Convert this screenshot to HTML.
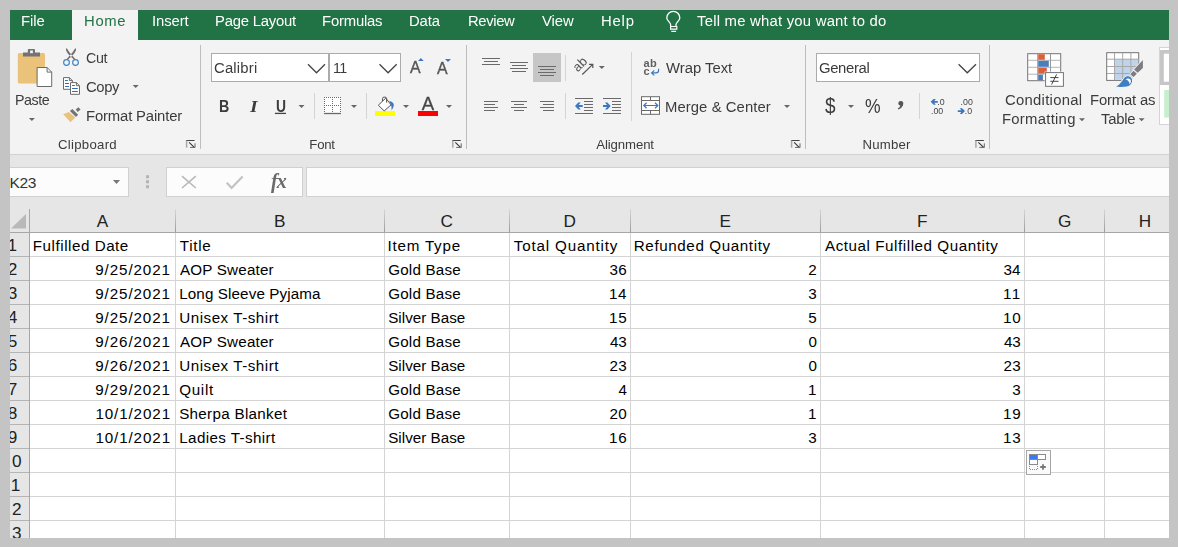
<!DOCTYPE html>
<html lang="en"><head><meta charset="utf-8"><title>Excel</title>
<style>
html,body{margin:0;padding:0}
body{width:1178px;height:547px;background:#c4c4c4;overflow:hidden;position:relative;font-family:"Liberation Sans",sans-serif}
#app{position:absolute;left:10px;top:10px;width:1159px;height:528px;overflow:hidden;background:#f3f3f3}
#in{position:absolute;left:-10px;top:-10px;width:1178px;height:547px}
#ui{position:absolute;left:0;top:0;width:1178px;height:547px;will-change:transform}
#cells{position:absolute;left:0;top:0}
.r{position:absolute}
.t{position:absolute;white-space:pre;line-height:20px}
svg{position:absolute;overflow:visible}
</style></head><body>
<div id="app"><div id="in">
<div class="r" style="left:10px;top:10px;width:1159px;height:30px;background:#217346"></div>
<div class="r" style="left:72px;top:10px;width:66px;height:30px;background:#f3f3f3"></div>
<div class="r" style="left:10px;top:154px;width:1159px;height:1px;background:#d2d2d2"></div>
<div class="r" style="left:10px;top:155px;width:1159px;height:383px;background:#e6e6e6"></div>
<div class="r" style="left:200px;top:45px;width:1px;height:104px;background:#bebebe"></div>
<div class="r" style="left:466px;top:45px;width:1px;height:104px;background:#bebebe"></div>
<div class="r" style="left:805px;top:45px;width:1px;height:104px;background:#bebebe"></div>
<div class="r" style="left:989px;top:45px;width:1px;height:104px;background:#bebebe"></div>
<div class="r" style="left:314px;top:93px;width:1px;height:26px;background:#d4d4d4"></div>
<div class="r" style="left:366px;top:93px;width:1px;height:26px;background:#d4d4d4"></div>
<div class="r" style="left:565px;top:55px;width:1px;height:26px;background:#d4d4d4"></div>
<div class="r" style="left:565px;top:93px;width:1px;height:26px;background:#d4d4d4"></div>
<div class="r" style="left:631px;top:52px;width:1px;height:69px;background:#d4d4d4"></div>
<div class="r" style="left:919px;top:93px;width:1px;height:26px;background:#d4d4d4"></div>
<div class="r" style="left:211px;top:53px;width:116px;height:27px;background:#fff;border:1px solid #ababab"></div>
<div class="r" style="left:329px;top:53px;width:70px;height:27px;background:#fff;border:1px solid #ababab"></div>
<div class="r" style="left:816px;top:53px;width:162px;height:27px;background:#fff;border:1px solid #ababab"></div>
<div class="r" style="left:533px;top:53px;width:28px;height:29px;background:#c6c6c6"></div>
<div class="r" style="left:375px;top:111px;width:20px;height:5px;background:#ffff00"></div>
<div class="r" style="left:418px;top:111px;width:20px;height:5px;background:#ff0000"></div>
<div class="r" style="left:-5px;top:167px;width:132px;height:28px;background:#fcfcfc;border:1px solid #d0d0d0"></div>
<div class="r" style="left:166px;top:167px;width:135px;height:28px;background:#fcfcfc;border:1px solid #d0d0d0"></div>
<div class="r" style="left:306px;top:167px;width:872px;height:28px;background:#fcfcfc;border:1px solid #d0d0d0"></div>
<div class="r" style="left:30px;top:233px;width:1139px;height:305px;background:#fff"></div>
<div class="r" style="left:30px;top:256px;width:1139px;height:1px;background:#d4d4d4"></div>
<div class="r" style="left:10px;top:256px;width:19px;height:1px;background:#b4b4b4"></div>
<div class="r" style="left:30px;top:280px;width:1139px;height:1px;background:#d4d4d4"></div>
<div class="r" style="left:10px;top:280px;width:19px;height:1px;background:#b4b4b4"></div>
<div class="r" style="left:30px;top:304px;width:1139px;height:1px;background:#d4d4d4"></div>
<div class="r" style="left:10px;top:304px;width:19px;height:1px;background:#b4b4b4"></div>
<div class="r" style="left:30px;top:328px;width:1139px;height:1px;background:#d4d4d4"></div>
<div class="r" style="left:10px;top:328px;width:19px;height:1px;background:#b4b4b4"></div>
<div class="r" style="left:30px;top:352px;width:1139px;height:1px;background:#d4d4d4"></div>
<div class="r" style="left:10px;top:352px;width:19px;height:1px;background:#b4b4b4"></div>
<div class="r" style="left:30px;top:376px;width:1139px;height:1px;background:#d4d4d4"></div>
<div class="r" style="left:10px;top:376px;width:19px;height:1px;background:#b4b4b4"></div>
<div class="r" style="left:30px;top:400px;width:1139px;height:1px;background:#d4d4d4"></div>
<div class="r" style="left:10px;top:400px;width:19px;height:1px;background:#b4b4b4"></div>
<div class="r" style="left:30px;top:424px;width:1139px;height:1px;background:#d4d4d4"></div>
<div class="r" style="left:10px;top:424px;width:19px;height:1px;background:#b4b4b4"></div>
<div class="r" style="left:30px;top:448px;width:1139px;height:1px;background:#d4d4d4"></div>
<div class="r" style="left:10px;top:448px;width:19px;height:1px;background:#b4b4b4"></div>
<div class="r" style="left:30px;top:472px;width:1139px;height:1px;background:#d4d4d4"></div>
<div class="r" style="left:10px;top:472px;width:19px;height:1px;background:#b4b4b4"></div>
<div class="r" style="left:30px;top:496px;width:1139px;height:1px;background:#d4d4d4"></div>
<div class="r" style="left:10px;top:496px;width:19px;height:1px;background:#b4b4b4"></div>
<div class="r" style="left:30px;top:520px;width:1139px;height:1px;background:#d4d4d4"></div>
<div class="r" style="left:10px;top:520px;width:19px;height:1px;background:#b4b4b4"></div>
<div class="r" style="left:175px;top:233px;width:1px;height:305px;background:#d4d4d4"></div>
<div class="r" style="left:175px;top:209px;width:1px;height:23px;background:linear-gradient(#d6d6d6,#9c9c9c)"></div>
<div class="r" style="left:384px;top:233px;width:1px;height:305px;background:#d4d4d4"></div>
<div class="r" style="left:384px;top:209px;width:1px;height:23px;background:linear-gradient(#d6d6d6,#9c9c9c)"></div>
<div class="r" style="left:509px;top:233px;width:1px;height:305px;background:#d4d4d4"></div>
<div class="r" style="left:509px;top:209px;width:1px;height:23px;background:linear-gradient(#d6d6d6,#9c9c9c)"></div>
<div class="r" style="left:630px;top:233px;width:1px;height:305px;background:#d4d4d4"></div>
<div class="r" style="left:630px;top:209px;width:1px;height:23px;background:linear-gradient(#d6d6d6,#9c9c9c)"></div>
<div class="r" style="left:820px;top:233px;width:1px;height:305px;background:#d4d4d4"></div>
<div class="r" style="left:820px;top:209px;width:1px;height:23px;background:linear-gradient(#d6d6d6,#9c9c9c)"></div>
<div class="r" style="left:1024px;top:233px;width:1px;height:305px;background:#d4d4d4"></div>
<div class="r" style="left:1024px;top:209px;width:1px;height:23px;background:linear-gradient(#d6d6d6,#9c9c9c)"></div>
<div class="r" style="left:1104px;top:233px;width:1px;height:305px;background:#d4d4d4"></div>
<div class="r" style="left:1104px;top:209px;width:1px;height:23px;background:linear-gradient(#d6d6d6,#9c9c9c)"></div>
<div class="r" style="left:29px;top:209px;width:1px;height:329px;background:#a6a6a6"></div>
<div class="r" style="left:10px;top:232px;width:1159px;height:1px;background:#a6a6a6"></div>
<div id="cells">
<span class="t" style="left:9.6px;top:173px;font-size:15.5px;color:#333;letter-spacing:-0.40px">K23</span>
<span class="t" style="left:32.8px;top:236px;font-size:15.2px;color:#000;letter-spacing:0.53px">Fulfilled Date</span>
<span class="t" style="left:179.8px;top:236px;font-size:15.2px;color:#000;letter-spacing:0.69px">Title</span>
<span class="t" style="left:387.5px;top:236px;font-size:15.2px;color:#000;letter-spacing:0.78px">Item Type</span>
<span class="t" style="left:513.8px;top:236px;font-size:15.2px;color:#000;letter-spacing:0.82px">Total Quantity</span>
<span class="t" style="left:633.8px;top:236px;font-size:15.2px;color:#000;letter-spacing:0.60px">Refunded Quantity</span>
<span class="t" style="left:825.0px;top:236px;font-size:15.2px;color:#000;letter-spacing:0.55px">Actual Fulfilled Quantity</span>
<span class="t" style="left:95.2px;top:260px;font-size:15.2px;color:#000;letter-spacing:0.91px">9/25/2021</span>
<span class="t" style="left:180.0px;top:260px;font-size:15.2px;color:#000;letter-spacing:0.19px">AOP Sweater</span>
<span class="t" style="left:388.2px;top:260px;font-size:15.2px;color:#000;letter-spacing:0.19px">Gold Base</span>
<span class="t" style="left:609.4px;top:260px;font-size:15.2px;color:#000;letter-spacing:0.34px">36</span>
<span class="t" style="left:808.3px;top:260px;font-size:15.2px;color:#000">2</span>
<span class="t" style="left:1003.4px;top:260px;font-size:15.2px;color:#000;letter-spacing:0.09px">34</span>
<span class="t" style="left:95.2px;top:284px;font-size:15.2px;color:#000;letter-spacing:0.91px">9/25/2021</span>
<span class="t" style="left:179.2px;top:284px;font-size:15.2px;color:#000;letter-spacing:0.12px">Long Sleeve Pyjama</span>
<span class="t" style="left:388.2px;top:284px;font-size:15.2px;color:#000;letter-spacing:0.19px">Gold Base</span>
<span class="t" style="left:608.9px;top:284px;font-size:15.2px;color:#000;letter-spacing:0.59px">14</span>
<span class="t" style="left:808.3px;top:284px;font-size:15.2px;color:#000">3</span>
<span class="t" style="left:1002.9px;top:284px;font-size:15.2px;color:#000;letter-spacing:1.60px">11</span>
<span class="t" style="left:95.2px;top:308px;font-size:15.2px;color:#000;letter-spacing:0.91px">9/25/2021</span>
<span class="t" style="left:179.2px;top:308px;font-size:15.2px;color:#000;letter-spacing:0.52px">Unisex T-shirt</span>
<span class="t" style="left:388.2px;top:308px;font-size:15.2px;color:#000;letter-spacing:0.03px">Silver Base</span>
<span class="t" style="left:608.9px;top:308px;font-size:15.2px;color:#000;letter-spacing:0.84px">15</span>
<span class="t" style="left:808.3px;top:308px;font-size:15.2px;color:#000">5</span>
<span class="t" style="left:1002.9px;top:308px;font-size:15.2px;color:#000;letter-spacing:0.84px">10</span>
<span class="t" style="left:95.2px;top:332px;font-size:15.2px;color:#000;letter-spacing:0.91px">9/26/2021</span>
<span class="t" style="left:180.0px;top:332px;font-size:15.2px;color:#000;letter-spacing:0.19px">AOP Sweater</span>
<span class="t" style="left:388.2px;top:332px;font-size:15.2px;color:#000;letter-spacing:0.19px">Gold Base</span>
<span class="t" style="left:609.9px;top:332px;font-size:15.2px;color:#000;letter-spacing:-0.16px">43</span>
<span class="t" style="left:808.4px;top:332px;font-size:15.2px;color:#000">0</span>
<span class="t" style="left:1003.9px;top:332px;font-size:15.2px;color:#000;letter-spacing:-0.16px">43</span>
<span class="t" style="left:95.2px;top:356px;font-size:15.2px;color:#000;letter-spacing:0.91px">9/26/2021</span>
<span class="t" style="left:179.2px;top:356px;font-size:15.2px;color:#000;letter-spacing:0.52px">Unisex T-shirt</span>
<span class="t" style="left:388.2px;top:356px;font-size:15.2px;color:#000;letter-spacing:0.03px">Silver Base</span>
<span class="t" style="left:609.4px;top:356px;font-size:15.2px;color:#000;letter-spacing:0.34px">23</span>
<span class="t" style="left:808.4px;top:356px;font-size:15.2px;color:#000">0</span>
<span class="t" style="left:1003.4px;top:356px;font-size:15.2px;color:#000;letter-spacing:0.34px">23</span>
<span class="t" style="left:95.2px;top:380px;font-size:15.2px;color:#000;letter-spacing:0.91px">9/29/2021</span>
<span class="t" style="left:179.2px;top:380px;font-size:15.2px;color:#000;letter-spacing:0.71px">Quilt</span>
<span class="t" style="left:388.2px;top:380px;font-size:15.2px;color:#000;letter-spacing:0.19px">Gold Base</span>
<span class="t" style="left:618.4px;top:380px;font-size:15.2px;color:#000">4</span>
<span class="t" style="left:808.0px;top:380px;font-size:15.2px;color:#000">1</span>
<span class="t" style="left:1012.3px;top:380px;font-size:15.2px;color:#000">3</span>
<span class="t" style="left:95.4px;top:404px;font-size:15.2px;color:#000;letter-spacing:0.89px">10/1/2021</span>
<span class="t" style="left:179.2px;top:404px;font-size:15.2px;color:#000;letter-spacing:0.30px">Sherpa Blanket</span>
<span class="t" style="left:388.2px;top:404px;font-size:15.2px;color:#000;letter-spacing:0.19px">Gold Base</span>
<span class="t" style="left:609.4px;top:404px;font-size:15.2px;color:#000;letter-spacing:0.34px">20</span>
<span class="t" style="left:808.0px;top:404px;font-size:15.2px;color:#000">1</span>
<span class="t" style="left:1002.9px;top:404px;font-size:15.2px;color:#000;letter-spacing:0.84px">19</span>
<span class="t" style="left:95.4px;top:428px;font-size:15.2px;color:#000;letter-spacing:0.89px">10/1/2021</span>
<span class="t" style="left:179.2px;top:428px;font-size:15.2px;color:#000;letter-spacing:0.40px">Ladies T-shirt</span>
<span class="t" style="left:388.2px;top:428px;font-size:15.2px;color:#000;letter-spacing:0.03px">Silver Base</span>
<span class="t" style="left:608.9px;top:428px;font-size:15.2px;color:#000;letter-spacing:0.84px">16</span>
<span class="t" style="left:808.3px;top:428px;font-size:15.2px;color:#000">3</span>
<span class="t" style="left:1002.9px;top:428px;font-size:15.2px;color:#000;letter-spacing:0.84px">13</span>
<span class="t" style="left:96.8px;top:211px;font-size:17.2px;color:#222">A</span>
<span class="t" style="left:274.0px;top:211px;font-size:17.2px;color:#222">B</span>
<span class="t" style="left:440.6px;top:211px;font-size:17.2px;color:#222">C</span>
<span class="t" style="left:563.5px;top:211px;font-size:17.2px;color:#222">D</span>
<span class="t" style="left:719.4px;top:211px;font-size:17.2px;color:#222">E</span>
<span class="t" style="left:916.9px;top:211px;font-size:17.2px;color:#222">F</span>
<span class="t" style="left:1058.1px;top:211px;font-size:17.2px;color:#222">G</span>
<span class="t" style="left:1138.8px;top:211px;font-size:17.2px;color:#222">H</span>
<span class="t" style="left:7.6px;top:235px;font-size:17.2px;color:#222">1</span>
<span class="t" style="left:7.8px;top:259px;font-size:17.2px;color:#222">2</span>
<span class="t" style="left:7.8px;top:283px;font-size:17.2px;color:#222">3</span>
<span class="t" style="left:7.8px;top:307px;font-size:17.2px;color:#222">4</span>
<span class="t" style="left:7.8px;top:331px;font-size:17.2px;color:#222">5</span>
<span class="t" style="left:7.7px;top:355px;font-size:17.2px;color:#222">6</span>
<span class="t" style="left:7.7px;top:379px;font-size:17.2px;color:#222">7</span>
<span class="t" style="left:7.8px;top:403px;font-size:17.2px;color:#222">8</span>
<span class="t" style="left:7.8px;top:427px;font-size:17.2px;color:#222">9</span>
<span class="t" style="left:0.9px;top:451px;font-size:17.2px;color:#222;letter-spacing:1.60px">10</span>
<span class="t" style="left:0.9px;top:475px;font-size:17.2px;color:#222;letter-spacing:1.60px">11</span>
<span class="t" style="left:0.9px;top:499px;font-size:17.2px;color:#222;letter-spacing:1.60px">12</span>
<span class="t" style="left:0.9px;top:523px;font-size:17.2px;color:#222;letter-spacing:1.60px">13</span>
</div>
<div id="ui">
<svg style="left:0;top:0" width="1178" height="547" viewBox="0 0 1178 547">
<path d="M28.9 118h6l-3 3z" fill="#666"/>
<path d="M132.7 85h6l-3 3z" fill="#666"/>
<path d="M298.5 105h6l-3 3z" fill="#666"/>
<path d="M351 105h6l-3 3z" fill="#666"/>
<path d="M403 105h6l-3 3z" fill="#666"/>
<path d="M446 105h6l-3 3z" fill="#666"/>
<path d="M598.8 66h6l-3 3z" fill="#666"/>
<path d="M784 105h6l-3 3z" fill="#666"/>
<path d="M848 105h6l-3 3z" fill="#666"/>
<path d="M1079 118.2h6l-3 3z" fill="#666"/>
<path d="M1138.6 118.2h6l-3 3z" fill="#666"/>
<path d="M112.9 180h7.2l-3.6 4z" fill="#777"/>
<g fill="none" stroke="#fff" stroke-width="1.3" transform="translate(0 .9)"><path d="M670.6 25.3v-1.6c0-2.2-3.8-4-3.8-6.7a6.5 6.5 0 0 1 13 0c0 2.7-3.8 4.5-3.8 6.7v1.6"/><path d="M670.6 25.6h6.2v2.6h-6.2zM671.3 30.4h4.8" stroke-width="1.2"/></g>
<rect x="17.8" y="53" width="27.2" height="30.6" rx="1.5" fill="#eac27a"/>
<path d="M23 52.4h4.8v-2.4a1 1 0 0 1 1-1h5.2a1 1 0 0 1 1 1v2.4h5v4.2h-17z" fill="#737373"/>
<rect x="30.1" y="50.5" width="2.8" height="2.7" fill="#f3f3f3"/>
<path d="M37.1 67.5h10l4.6 4.6v14.4h-14.6z" fill="#fff" stroke="#6a6a6a" stroke-width="1"/><path d="M47.1 67.5v4.6h4.6" fill="none" stroke="#6a6a6a"/>
<path d="M66.18 47.98 67.49 49.17 69.16 52.02 72.01 55.31 75.52 59.25 74.42 59.69 70.47 56.62 67.62 53.33 66 50.26zM75.82 47.98 74.51 49.17 72.84 52.02 69.99 55.31 66.48 59.25 67.58 59.69 71.53 56.62 74.38 53.33 76 50.26z" fill="#6e6e6e"/>
<circle cx="66.5" cy="62.5" r="2.85" fill="none" stroke="#4080c4" stroke-width="1.15"/><circle cx="75.5" cy="62.5" r="2.85" fill="none" stroke="#4080c4" stroke-width="1.15"/>
<path d="M63.5 77.6h5.9l3 3v8.7h-8.9z" fill="#fff" stroke="#6a6a6a"/><path d="M69.4 77.6v3h3" fill="none" stroke="#6a6a6a"/>
<path d="M65 80.5h2.8M65 83.5h4M65 86.5h4" stroke="#2e6db4" stroke-width="1.1"/>
<path d="M70.5 82.6h5.9l3.1 3.1v8.6h-9z" fill="#fff" stroke="#6a6a6a"/><path d="M76.4 82.6v3.1h3.1" fill="none" stroke="#6a6a6a"/>
<path d="M72.1 85.5h2.8M72.1 88.5h5.7M72.1 91.5h5.7" stroke="#2e6db4" stroke-width="1.1"/>
<path d="M63.2 114.3L68.9 112 75.3 117.5 70.5 122.3z" fill="#eac27a"/>
<path d="M69.9 111L72.3 109.1 78.1 114.8 76 116.9z" fill="#737373"/><path d="M75.7 109.6L78.4 107.2 80.6 109.4 77.7 112z" fill="#737373"/>
<path d="M274.9 113.4h11.1" stroke="#444" stroke-width="1.3"/>
<path d="M308 64.3L316.5 72.8L325 64.3" fill="none" stroke="#444" stroke-width="1.3"/>
<path d="M379.5 64.3L388.1 72.8L396.7 64.3" fill="none" stroke="#444" stroke-width="1.3"/>
<path d="M958.6 64.3L967.3 72.8L976 64.3" fill="none" stroke="#444" stroke-width="1.3"/>
<rect x="324" y="97" width="17" height="17" fill="#fff"/>
<g stroke="#6a6a6a" stroke-width="1" stroke-dasharray="1 1"><path d="M324 97.5h17M324 105.5h17M324.5 97v16M332.5 97v16M340.5 97v16"/></g>
<path d="M324 113.5h17" stroke="#6a6a6a" stroke-width="1.3"/>
<path d="M378.3 105.2L385.8 98.1 391 104.9 384.2 110.9z" fill="#fff" stroke="#555" stroke-width="1"/>
<path d="M382.5 101v-2.3a1.6 1.6 0 0 1 1.6-1.6h0.9a1.6 1.6 0 0 1 1.6 1.6v4" fill="none" stroke="#555" stroke-width="1"/>
<path d="M389.1 101c3 .5 4.7 2 4.7 4 0 1.5-1 3.5-2.2 5.4 .3-3.5-.5-6.5-2.5-9.4z" fill="#3a78c0"/>
<path d="M418.1 60.9l2.8-2.9 2.8 2.9z" fill="#3a78c0"/><path d="M445 59.1h6l-3 2.9z" fill="#3a78c0"/>
<path d="M482 58.5H500M484 61.5H498M482 64.5H500" stroke="#6a6a6a" stroke-width="1"/>
<path d="M510 62.5H528M512 65.5H526M510 68.5H528M512 71.5H526" stroke="#6a6a6a" stroke-width="1"/>
<path d="M538 66.5H556M540 69.5H554M538 72.5H556M540 75.5H554" stroke="#6a6a6a" stroke-width="1"/>
<path d="M484 101.5H498M484 104.5H495M484 107.5H498M484 110.5H495" stroke="#6a6a6a" stroke-width="1"/>
<path d="M511 101.5H527M514 104.5H524M511 107.5H527M514 110.5H524" stroke="#6a6a6a" stroke-width="1"/>
<path d="M540 101.5H554M543 104.5H554M540 107.5H554M543 110.5H554" stroke="#6a6a6a" stroke-width="1"/>
<text x="0" y="0" transform="translate(577.8 72.4) rotate(-45)" font-family="Liberation Sans, sans-serif" font-size="13" fill="#555">ab</text>
<path d="M582.3 74.5L592.5 64.6M589 64.4h3.8v3.6" fill="none" stroke="#555" stroke-width="1.2"/>
<path d="M575 98.5H593M584 101.5H593M584 104.5H593M584 107.5H593M584 110.5H593M575 113.5H593" stroke="#6a6a6a" stroke-width="1"/>
<path d="M603 98.5H621M612 101.5H621M612 104.5H621M612 107.5H621M612 110.5H621M603 113.5H621" stroke="#6a6a6a" stroke-width="1"/>
<path d="M582.7 105.1v1.8h-4l2 2.6h-2.4l-3.3-3.5 3.3-3.5h2.4l-2 2.6z" fill="#3a78c0"/>
<path d="M603 105.1v1.8h4l-2 2.6h2.4l3.3-3.5-3.3-3.5h-2.4l2 2.6z" fill="#3a78c0"/>
<text x="643.4" y="66.7" font-family="Liberation Sans, sans-serif" font-size="11" font-weight="bold" fill="#606060" letter-spacing="0.6">ab</text><text x="643.4" y="74.8" font-family="Liberation Sans, sans-serif" font-size="11" font-weight="bold" fill="#606060">c</text>
<path d="M658.6 68.8v1.5a2.6 2.6 0 0 1-2.6 2.6h-4.2M654.3 70.4l-2.7 2.5 2.7 2.5" fill="none" stroke="#3a78c0" stroke-width="1.2"/>
<rect x="641.5" y="96.7" width="18" height="17.6" fill="#fff" stroke="#6a6a6a"/><path d="M641.5 100.5h18M641.5 110.5h18M650.5 96.7v3.8M650.5 110.5v3.8" stroke="#6a6a6a" fill="none"/>
<path d="M644 105.5h13.5M646.6 102.8l-2.8 2.7 2.8 2.7M655 102.8l2.8 2.7-2.8 2.7" stroke="#3a78c0" stroke-width="1.2" fill="none"/>
<path d="M898.3 103.3a2.5 2.5 0 1 1 5 .2c0 2.5-1.8 4.8-5 6.1l-.5-1c1.5-.8 2.4-1.8 2.5-3-1.2-.1-2-1-2-2.3z" fill="#555"/>
<text x="937.2" y="104.8" font-family="Liberation Sans, sans-serif" font-size="8.8" fill="#444">.0</text>
<text x="931" y="113.6" font-family="Liberation Sans, sans-serif" font-size="8.8" fill="#444">.00</text>
<text x="960.6" y="104.8" font-family="Liberation Sans, sans-serif" font-size="8.8" fill="#444">.00</text>
<text x="964.8" y="113.6" font-family="Liberation Sans, sans-serif" font-size="8.8" fill="#444">.0</text>
<path d="M937.8 101v1.7h-3.5l1.5 2h-2.2l-3-2.85 3-2.85h2.2l-1.5 2z" fill="#3a78c0"/>
<path d="M957.8 110.2v1.7h3.5l-1.5 2h2.2l3-2.85-3-2.85h-2.2l1.5 2z" fill="#3a78c0"/>
<g transform="translate(186 140)" fill="none"><path d="M0 .5h8.6" stroke="#444"/><path d="M.6 .5v7.2" stroke="#a8a8a8" stroke-width="1.5"/><path d="M3.1 2.4L8.3 7.4" stroke="#333" stroke-width="1.1"/><path d="M4 7.4h5M9 3.3v4.4" stroke="#666"/></g>
<g transform="translate(452.2 140)" fill="none"><path d="M0 .5h8.6" stroke="#444"/><path d="M.6 .5v7.2" stroke="#a8a8a8" stroke-width="1.5"/><path d="M3.1 2.4L8.3 7.4" stroke="#333" stroke-width="1.1"/><path d="M4 7.4h5M9 3.3v4.4" stroke="#666"/></g>
<g transform="translate(791 140)" fill="none"><path d="M0 .5h8.6" stroke="#444"/><path d="M.6 .5v7.2" stroke="#a8a8a8" stroke-width="1.5"/><path d="M3.1 2.4L8.3 7.4" stroke="#333" stroke-width="1.1"/><path d="M4 7.4h5M9 3.3v4.4" stroke="#666"/></g>
<g transform="translate(975.3 140)" fill="none"><path d="M0 .5h8.6" stroke="#444"/><path d="M.6 .5v7.2" stroke="#a8a8a8" stroke-width="1.5"/><path d="M3.1 2.4L8.3 7.4" stroke="#333" stroke-width="1.1"/><path d="M4 7.4h5M9 3.3v4.4" stroke="#666"/></g>
<rect x="1027.7" y="53.7" width="33" height="27" fill="#fff" stroke="#737373"/>
<path d="M1028 60.3h32.5M1028 67.3h32.5M1028 74.2h32.5" stroke="#b4b4b4"/><path d="M1037.7 54v26.5M1050.5 54v26.5" stroke="#999"/>
<rect x="1038.2" y="54.2" width="6.6" height="5.6" fill="#d9603b"/><rect x="1038.2" y="60.8" width="10.6" height="6" fill="#4a7ebb"/><rect x="1038.2" y="67.8" width="8.6" height="5.9" fill="#d9603b"/><rect x="1038.2" y="74.7" width="4.7" height="5.5" fill="#4a7ebb"/>
<rect x="1044.6" y="71.6" width="19.8" height="15.7" fill="#f3f3f3"/><rect x="1045.6" y="72.6" width="17.8" height="13.7" fill="#fff" stroke="#737373"/>
<path d="M1050.3 77.6h8.2M1050.3 81.3h8.2M1051.6 84.5L1056.6 74.4" stroke="#444" stroke-width="1" fill="none"/>
<rect x="1106.7" y="52.7" width="32" height="27.7" fill="#fff" stroke="#737373"/><rect x="1114.5" y="59.2" width="23.7" height="20.7" fill="#bfd4ea"/>
<path d="M1107 59.2h31.5M1107 66.5h31.5M1107 73.5h31.5M1114.5 53v27M1122.7 53v27M1130.9 53v27" stroke="#a8a8a8" fill="none"/>
<path d="M1137.6 72.7L1136.8 73.8 1133.6 77.1 1132 80.5 1130.5 81.4H1140.6V70.8z" fill="#f3f3f3"/>
<g stroke="#f3f3f3" stroke-width="1.6" stroke-linejoin="round"><path d="M1142.9 60.1V68L1137.6 72.7 1134.1 69.6z" fill="#7d7d7d"/><path d="M1133.5 70.8L1136.8 73.8 1133.6 77.1 1130.3 74.2z" fill="#7d7d7d"/><path d="M1116 86.8c4.5-2.5 6.5-6.5 8.2-8.8 2-2.4 5.3-2.2 6.9-.2 1.7 2.2 1.2 5.3-1 7.1-2.2 1.7-6 2.2-14.1 1.9z" fill="#3f7ec2"/></g>
<path d="M1142.9 60.1V68L1137.6 72.7 1134.1 69.6z" fill="#7d7d7d"/><path d="M1133.5 70.8L1136.8 73.8 1133.6 77.1 1130.3 74.2z" fill="#7d7d7d"/><path d="M1116 86.8c4.5-2.5 6.5-6.5 8.2-8.8 2-2.4 5.3-2.2 6.9-.2 1.7 2.2 1.2 5.3-1 7.1-2.2 1.7-6 2.2-14.1 1.9z" fill="#3f7ec2"/>
<path d="M1125.4 79.2c1.6-1.2 4-1.1 5 .4 1 1.5.5 3.6-.9 4.6.1-2.3-1.4-4.3-4.1-5z" fill="#fff"/>
<rect x="1159.5" y="47.5" width="12" height="77" fill="#fff" stroke="#d4d4d4"/><rect x="1160" y="50" width="11" height="35" fill="#c6c6c6"/><rect x="1163.8" y="53.7" width="8" height="28" fill="#fff"/><rect x="1164.2" y="90" width="8" height="27.6" fill="#c6efce"/>
<path d="M146 175.2h3v3h-3zM146 180.2h3v3h-3zM146 185.2h3v3h-3z" fill="#b4b4b4"/>
<path d="M182 176.2L195.8 188M195.8 176.2L182 188" stroke="#b8b8b8" stroke-width="1.6" fill="none"/>
<path d="M226.8 182.7L231.6 188 242.6 176.6" stroke="#c2c2c2" stroke-width="2.2" fill="none"/>
<path d="M26 214v14.5h-15z" fill="#b9b9b9"/>
<rect x="1026.5" y="450.5" width="24" height="24" fill="#fafafa" stroke="#a6a6a6"/>
<rect x="1029.5" y="454.5" width="8" height="5" fill="#3b78f0" stroke="#8a8a8a"/><rect x="1037.5" y="454.5" width="8" height="5" fill="#fff" stroke="#8a8a8a"/><rect x="1029.5" y="459.5" width="8" height="5" fill="#fff" stroke="#8a8a8a"/>
<path d="M1029.5 466v3.5h8V466" fill="none" stroke="#8a8a8a" stroke-dasharray="1 1"/><path d="M1043 464.2v5.6M1040.2 467h5.6" stroke="#777" stroke-width="1.8"/>
</svg>
<span class="t" style="left:20.9px;top:11px;font-size:15.4px;color:#fff;letter-spacing:-0.09px;transform:scaleX(0.965);transform-origin:0 0">File</span>
<span class="t" style="left:84.0px;top:11px;font-size:15.4px;color:#217346;letter-spacing:0.68px;transform:scaleX(0.965);transform-origin:0 0">Home</span>
<span class="t" style="left:151.6px;top:11px;font-size:15.4px;color:#fff;letter-spacing:-0.10px;transform:scaleX(0.965);transform-origin:0 0">Insert</span>
<span class="t" style="left:214.5px;top:11px;font-size:15.4px;color:#fff;letter-spacing:-0.24px;transform:scaleX(0.965);transform-origin:0 0">Page Layout</span>
<span class="t" style="left:321.8px;top:11px;font-size:15.4px;color:#fff;letter-spacing:-0.20px;transform:scaleX(0.965);transform-origin:0 0">Formulas</span>
<span class="t" style="left:409.2px;top:11px;font-size:15.4px;color:#fff;letter-spacing:-0.12px;transform:scaleX(0.965);transform-origin:0 0">Data</span>
<span class="t" style="left:467.8px;top:11px;font-size:15.4px;color:#fff;letter-spacing:-0.40px;transform:scaleX(0.965);transform-origin:0 0">Review</span>
<span class="t" style="left:541.9px;top:11px;font-size:15.4px;color:#fff;letter-spacing:-0.10px;transform:scaleX(0.965);transform-origin:0 0">View</span>
<span class="t" style="left:600.7px;top:11px;font-size:15.4px;color:#fff;letter-spacing:0.83px;transform:scaleX(0.965);transform-origin:0 0">Help</span>
<span class="t" style="left:696.9px;top:11px;font-size:15.4px;color:#fff;letter-spacing:0.24px;transform:scaleX(0.965);transform-origin:0 0">Tell me what you want to do</span>
<span class="t" style="left:15.0px;top:90px;font-size:14.8px;color:#3c3c3c;letter-spacing:-0.50px;transform:scaleX(0.965);transform-origin:0 0">Paste</span>
<span class="t" style="left:86.3px;top:48px;font-size:14.8px;color:#3c3c3c;letter-spacing:-0.45px;transform:scaleX(0.965);transform-origin:0 0">Cut</span>
<span class="t" style="left:86.3px;top:77px;font-size:15.4px;color:#3c3c3c;letter-spacing:-0.41px;transform:scaleX(0.965);transform-origin:0 0">Copy</span>
<span class="t" style="left:85.8px;top:106px;font-size:15.4px;color:#3c3c3c;letter-spacing:-0.16px;transform:scaleX(0.965);transform-origin:0 0">Format Painter</span>
<span class="t" style="left:58.0px;top:135px;font-size:13.2px;color:#3c3c3c;letter-spacing:0.28px">Clipboard</span>
<span class="t" style="left:214.3px;top:58px;font-size:15.4px;color:#3c3c3c;letter-spacing:0.19px;transform:scaleX(0.965);transform-origin:0 0">Calibri</span>
<span class="t" style="left:332.8px;top:58px;font-size:14.8px;color:#3c3c3c;letter-spacing:-0.55px;transform:scaleX(0.965);transform-origin:0 0">11</span>
<span class="t" style="left:218.9px;top:97px;font-size:17px;color:#3c3c3c;font-weight:bold;transform:scaleX(0.84);transform-origin:0 0">B</span>
<span class="t" style="left:249.6px;top:97px;font-size:17px;color:#3c3c3c;font-weight:bold;font-style:italic;font-family:'Liberation Serif',serif;transform:scaleX(1.15);transform-origin:0 0">I</span>
<span class="t" style="left:275.6px;top:96px;font-size:16.5px;color:#3c3c3c;font-weight:bold;transform:scaleX(0.84);transform-origin:0 0">U</span>
<span class="t" style="left:309.3px;top:135px;font-size:13.2px;color:#3c3c3c;letter-spacing:-0.22px">Font</span>
<span class="t" style="left:409.9px;top:58px;font-size:15.9px;color:#555;-webkit-text-stroke:0.35px #555">A</span>
<span class="t" style="left:437.1px;top:59px;font-size:15.9px;color:#555;-webkit-text-stroke:0.35px #555">A</span>
<span class="t" style="left:421.8px;top:94px;font-size:18.6px;color:#444;-webkit-text-stroke:0.3px #444">A</span>
<span class="t" style="left:665.7px;top:58px;font-size:15.4px;color:#3c3c3c;letter-spacing:-0.01px;transform:scaleX(0.965);transform-origin:0 0">Wrap Text</span>
<span class="t" style="left:665.2px;top:97px;font-size:15.4px;color:#3c3c3c;letter-spacing:0.07px;transform:scaleX(0.965);transform-origin:0 0">Merge &amp; Center</span>
<span class="t" style="left:596.2px;top:135px;font-size:13.2px;color:#3c3c3c;letter-spacing:-0.10px">Alignment</span>
<span class="t" style="left:819.3px;top:58px;font-size:15.4px;color:#3c3c3c;letter-spacing:-0.37px;transform:scaleX(0.965);transform-origin:0 0">General</span>
<span class="t" style="left:824.5px;top:96px;font-size:22px;color:#3c3c3c;transform:scaleX(0.86);transform-origin:0 0">$</span>
<span class="t" style="left:864.9px;top:96px;font-size:19.5px;color:#3c3c3c;transform:scaleX(0.9);transform-origin:0 0">%</span>
<span class="t" style="left:862.6px;top:135px;font-size:13.2px;color:#3c3c3c;letter-spacing:0.19px">Number</span>
<span class="t" style="left:1005.2px;top:90px;font-size:15.4px;color:#3c3c3c;letter-spacing:0.29px;transform:scaleX(0.965);transform-origin:0 0">Conditional</span>
<span class="t" style="left:1001.9px;top:109px;font-size:15.4px;color:#3c3c3c;letter-spacing:0.28px;transform:scaleX(0.965);transform-origin:0 0">Formatting</span>
<span class="t" style="left:1089.8px;top:90px;font-size:15.4px;color:#3c3c3c;letter-spacing:-0.17px;transform:scaleX(0.965);transform-origin:0 0">Format as</span>
<span class="t" style="left:1100.8px;top:109px;font-size:15.4px;color:#3c3c3c;letter-spacing:-0.23px;transform:scaleX(0.965);transform-origin:0 0">Table</span>
<span class="t" style="left:270.9px;top:171px;font-size:20px;color:#6a6a6a;letter-spacing:-0.85px;font-weight:bold;font-style:italic;font-family:'Liberation Serif',serif">fx</span>
</div>
</div></div>
</body></html>
